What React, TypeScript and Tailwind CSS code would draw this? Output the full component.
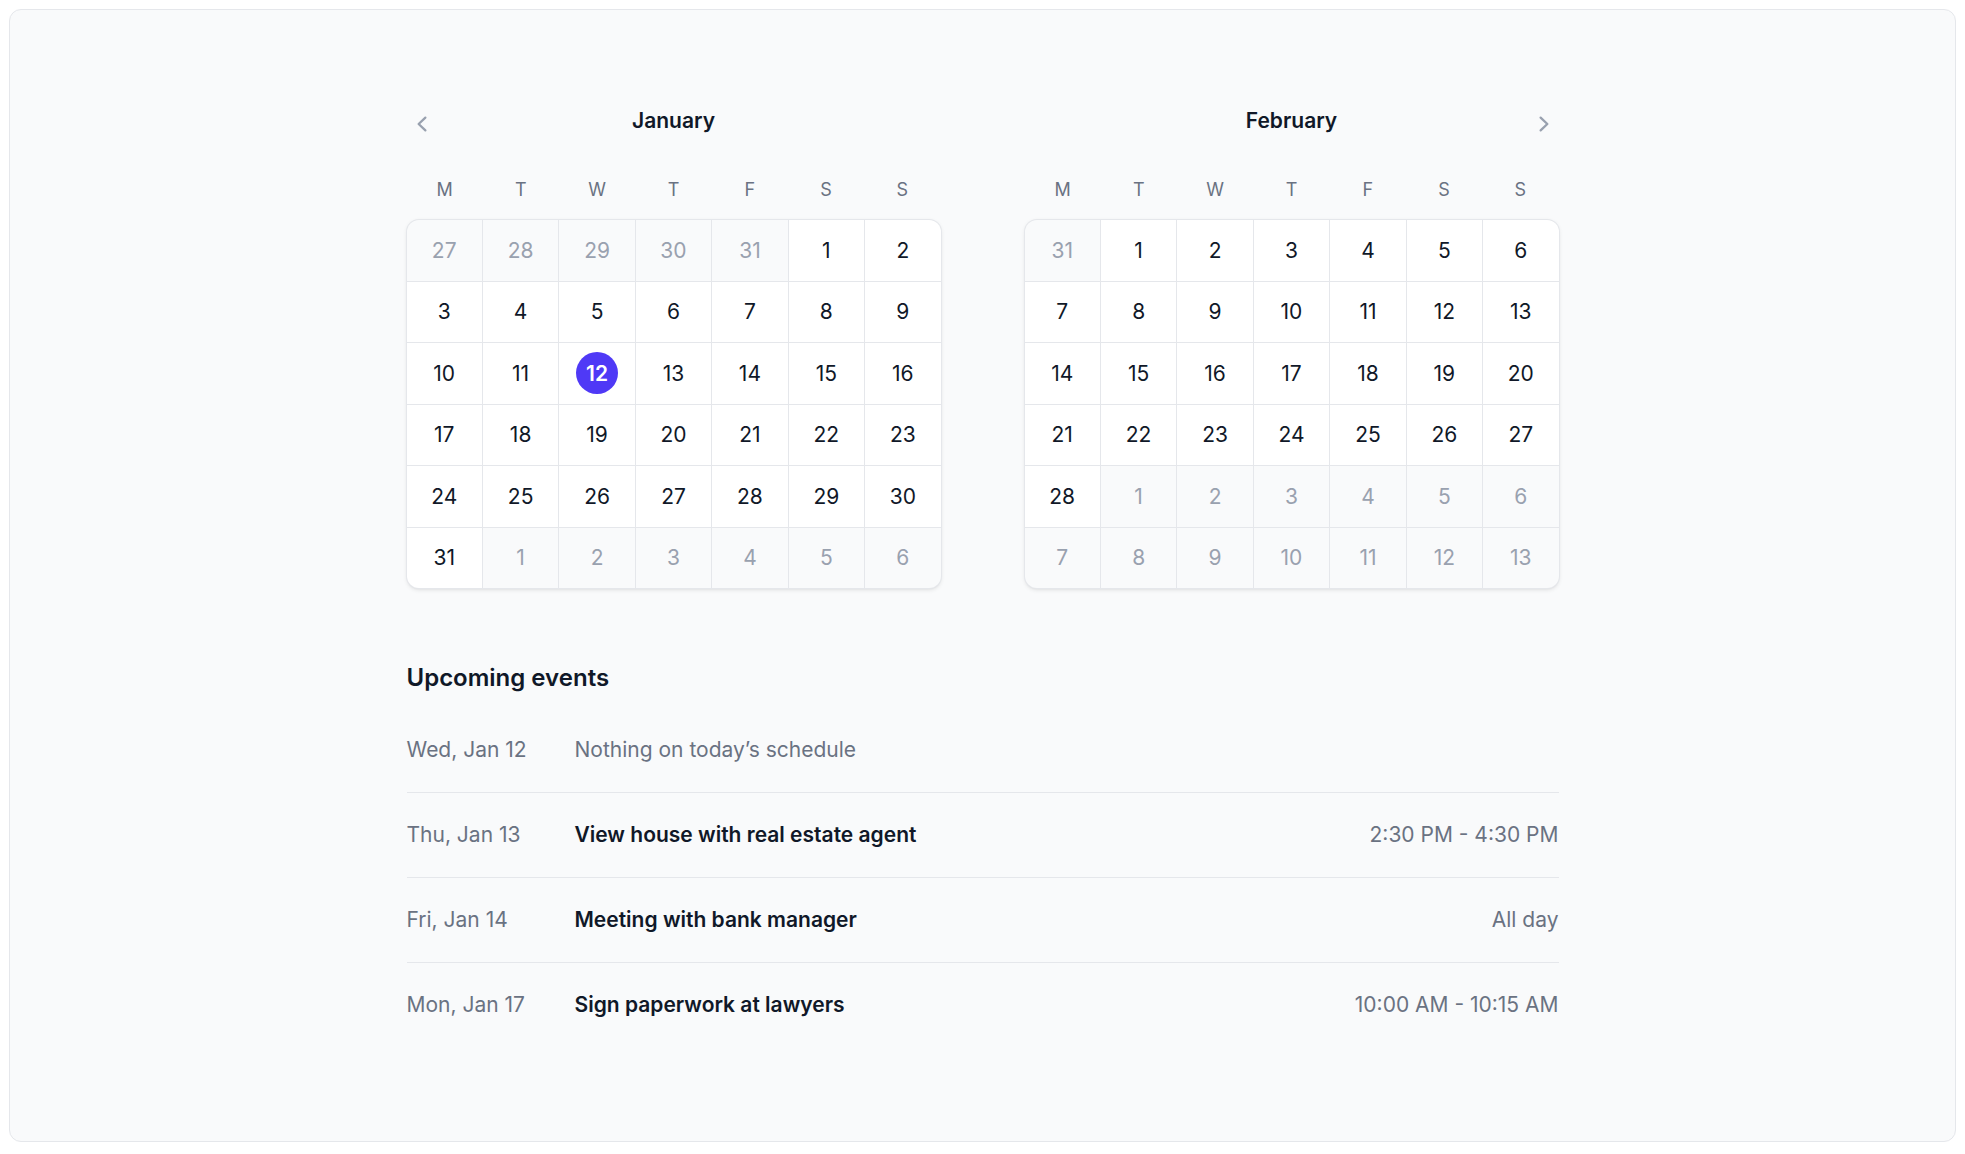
import React from "react";

type Day = { d: number; cur: boolean; today?: boolean };

function range(a: number, b: number, cur: boolean): Day[] {
  const out: Day[] = [];
  for (let i = a; i <= b; i++) out.push({ d: i, cur });
  return out;
}

const janDays: Day[] = [
  ...range(27, 31, false),
  ...range(1, 31, true).map((x) => (x.d === 12 ? { ...x, today: true } : x)),
  ...range(1, 6, false),
];

const febDays: Day[] = [
  ...range(31, 31, false),
  ...range(1, 28, true),
  ...range(1, 13, false),
];

const weekdays = ["M", "T", "W", "T", "F", "S", "S"];

function Month({ name, days }: { name: string; days: Day[] }) {
  return (
    <section className="text-center">
      <h2 className="text-[21px] leading-[30px] font-semibold text-gray-900">{name}</h2>
      <div className="mt-[36px] grid grid-cols-7 text-[18px] leading-[36px] text-gray-500">
        {weekdays.map((w, i) => (
          <div key={i}>{w}</div>
        ))}
      </div>
      <div className="isolate mt-[12px] grid grid-cols-7 gap-px rounded-[12px] bg-gray-200 text-[21px] shadow-[0_1.5px_4.5px_0_rgba(0,0,0,0.1),0_1.5px_3px_-1.5px_rgba(0,0,0,0.1)] ring-1 ring-gray-200">
        {days.map((day, i) => (
          <button
            key={i}
            type="button"
            className={[
              day.cur ? "bg-white text-gray-900" : "bg-gray-50 text-gray-400",
              i === 0 ? "rounded-tl-[12px]" : "",
              i === 6 ? "rounded-tr-[12px]" : "",
              i === days.length - 7 ? "rounded-bl-[12px]" : "",
              i === days.length - 1 ? "rounded-br-[12px]" : "",
              "relative py-[9.25px]",
            ].join(" ")}
          >
            <time
              className={[
                day.today ? "bg-indigo-600 font-semibold text-white" : "",
                "mx-auto flex h-[42px] w-[42px] items-center justify-center rounded-full",
              ].join(" ")}
            >
              {day.d}
            </time>
          </button>
        ))}
      </div>
    </section>
  );
}

const events = [
  { date: "Wed, Jan 12", title: "Nothing on today’s schedule", time: "", empty: true },
  { date: "Thu, Jan 13", title: "View house with real estate agent", time: "2:30 PM - 4:30 PM" },
  { date: "Fri, Jan 14", title: "Meeting with bank manager", time: "All day" },
  { date: "Mon, Jan 17", title: "Sign paperwork at lawyers", time: "10:00 AM - 10:15 AM" },
];

export default function App() {
  return (
    <div className="min-h-screen bg-white p-[9px] font-['Inter',sans-serif]">
      <div className="h-[1133px] rounded-[12px] border border-gray-200 bg-gray-50 pt-[96px]">
        <div className="mx-auto w-[1152px]">
          <div className="relative grid grid-cols-2 gap-x-[84px]">
            <button
              type="button"
              className="absolute left-[-9px] top-[-6px] flex items-center justify-center p-[9px] text-gray-400"
            >
              <svg viewBox="0 0 20 20" fill="currentColor" className="h-[30px] w-[30px]">
                <path
                  fillRule="evenodd"
                  d="M12.79 5.23a.75.75 0 01-.02 1.06L8.832 10l3.938 3.71a.75.75 0 11-1.04 1.08l-4.5-4.25a.75.75 0 010-1.08l4.5-4.25a.75.75 0 011.06.02z"
                  clipRule="evenodd"
                />
              </svg>
            </button>
            <button
              type="button"
              className="absolute right-[-9px] top-[-6px] flex items-center justify-center p-[9px] text-gray-400"
            >
              <svg viewBox="0 0 20 20" fill="currentColor" className="h-[30px] w-[30px]">
                <path
                  fillRule="evenodd"
                  d="M7.21 14.77a.75.75 0 01.02-1.06L11.168 10 7.23 6.29a.75.75 0 111.04-1.08l4.5 4.25a.75.75 0 010 1.08l-4.5 4.25a.75.75 0 01-1.06-.02z"
                  clipRule="evenodd"
                />
              </svg>
            </button>
            <Month name="January" days={janDays} />
            <Month name="February" days={febDays} />
          </div>
          <section className="mt-[72px]">
            <h2 className="text-[24px] leading-[36px] font-semibold text-gray-900">Upcoming events</h2>
            <ol className="mt-[12px] divide-y divide-gray-200 text-[21px] leading-[36px] text-gray-500">
              {events.map((e, i) => (
                <li key={i} className="flex py-[24px]">
                  <time className="w-[168px] flex-none">{e.date}</time>
                  <p className={e.empty ? "flex-auto" : "flex-auto font-semibold text-gray-900"}>{e.title}</p>
                  {e.time ? <p className="ml-[36px] flex-none">{e.time}</p> : null}
                </li>
              ))}
            </ol>
          </section>
        </div>
      </div>
    </div>
  );
}
